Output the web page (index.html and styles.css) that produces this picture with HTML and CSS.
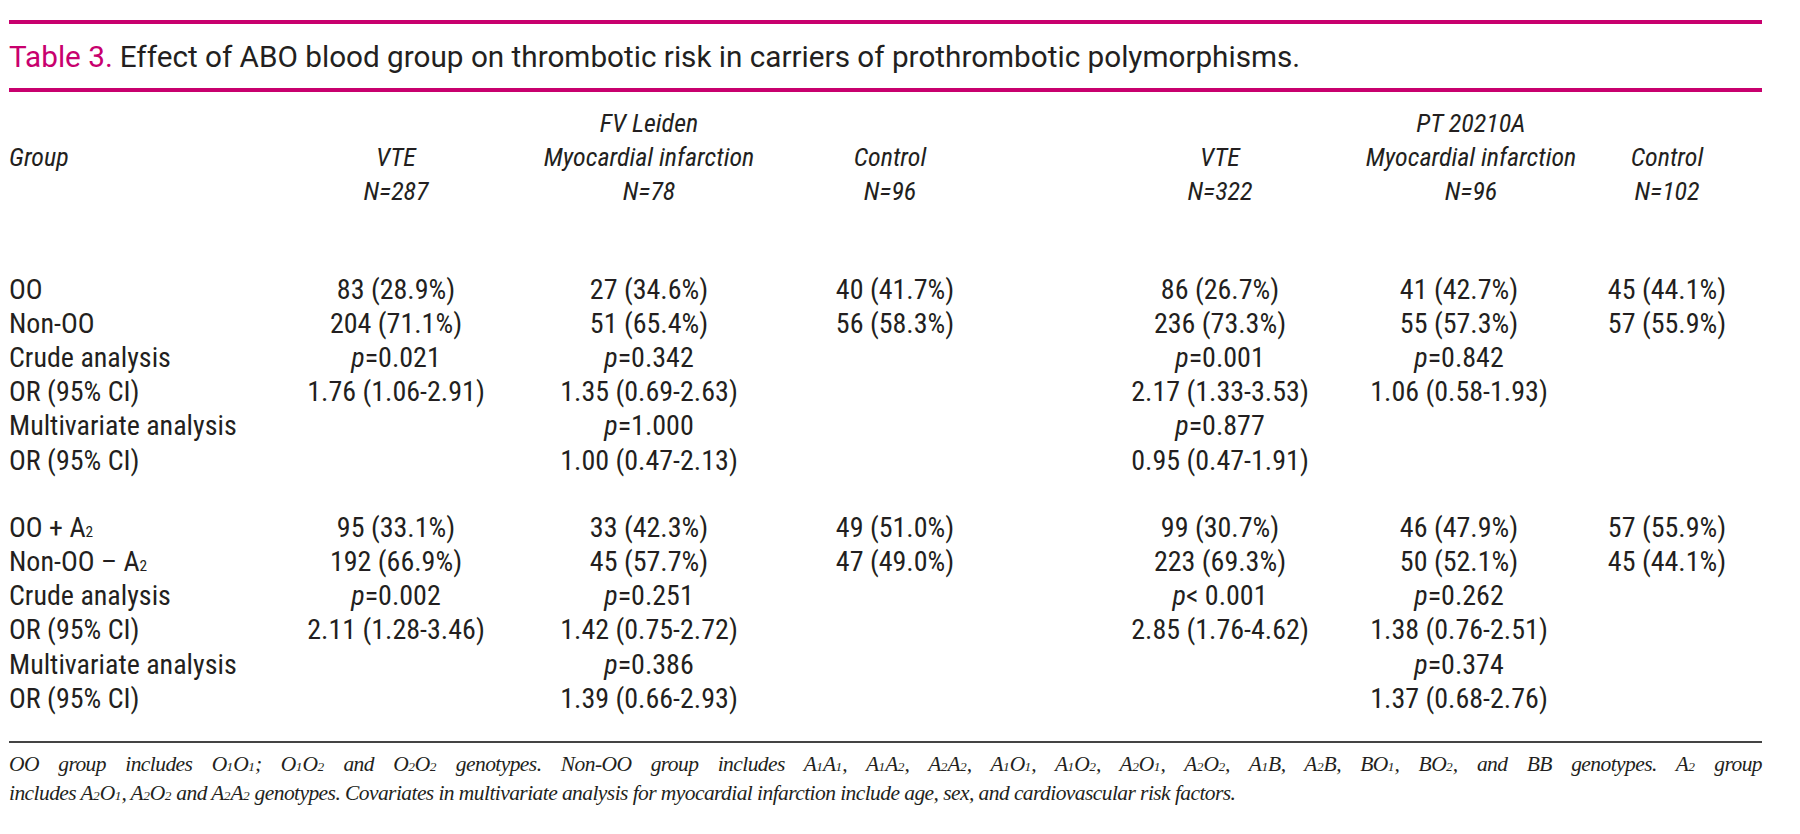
FILE: index.html
```html
<!DOCTYPE html>
<html lang="en">
<head>
<meta charset="utf-8">
<title>Table 3</title>
<link rel="stylesheet" href="styles.css">
</head>
<body>
<div class="page">
  <div class="rule-pink"></div>
  <h1 class="title"><span class="label">Table 3.</span> Effect of ABO blood group on thrombotic risk in carriers of prothrombotic polymorphisms.</h1>
  <div class="rule-pink"></div>
  <table class="data">
    <colgroup>
      <col class="c-label"><col class="c-vte1"><col class="c-mi1"><col class="c-ctl1"><col class="c-vte2"><col class="c-mi2"><col class="c-ctl2">
    </colgroup>
    <thead>
      <tr><th></th><th></th><th>FV Leiden</th><th></th><th class="pad"></th><th class="mi2">PT 20210A</th><th></th></tr>
      <tr><th class="lbl">Group</th><th>VTE</th><th>Myocardial infarction</th><th>Control</th><th class="pad">VTE</th><th class="mi2">Myocardial infarction</th><th>Control</th></tr>
      <tr><th></th><th>N=287</th><th>N=78</th><th>N=96</th><th class="pad">N=322</th><th class="mi2">N=96</th><th>N=102</th></tr>
    </thead>
    <tbody class="grp first">
      <tr><td class="lbl">OO</td><td>83 (28.9%)</td><td>27 (34.6%)</td><td class="ctl1">40 (41.7%)</td><td class="pad">86 (26.7%)</td><td class="mi2">41 (42.7%)</td><td>45 (44.1%)</td></tr>
      <tr><td class="lbl">Non-OO</td><td>204 (71.1%)</td><td>51 (65.4%)</td><td class="ctl1">56 (58.3%)</td><td class="pad">236 (73.3%)</td><td class="mi2">55 (57.3%)</td><td>57 (55.9%)</td></tr>
      <tr><td class="lbl">Crude analysis</td><td><i>p</i>=0.021</td><td><i>p</i>=0.342</td><td class="ctl1"></td><td class="pad"><i>p</i>=0.001</td><td class="mi2"><i>p</i>=0.842</td><td></td></tr>
      <tr><td class="lbl">OR (95% CI)</td><td>1.76 (1.06-2.91)</td><td>1.35 (0.69-2.63)</td><td class="ctl1"></td><td class="pad">2.17 (1.33-3.53)</td><td class="mi2">1.06 (0.58-1.93)</td><td></td></tr>
      <tr><td class="lbl">Multivariate analysis</td><td></td><td><i>p</i>=1.000</td><td class="ctl1"></td><td class="pad"><i>p</i>=0.877</td><td class="mi2"></td><td></td></tr>
      <tr><td class="lbl">OR (95% CI)</td><td></td><td>1.00 (0.47-2.13)</td><td class="ctl1"></td><td class="pad">0.95 (0.47-1.91)</td><td class="mi2"></td><td></td></tr>
    </tbody>
    <tbody class="grp second">
      <tr><td class="lbl">OO + A<sub>2</sub></td><td>95 (33.1%)</td><td>33 (42.3%)</td><td class="ctl1">49 (51.0%)</td><td class="pad">99 (30.7%)</td><td class="mi2">46 (47.9%)</td><td>57 (55.9%)</td></tr>
      <tr><td class="lbl">Non-OO – A<sub>2</sub></td><td>192 (66.9%)</td><td>45 (57.7%)</td><td class="ctl1">47 (49.0%)</td><td class="pad">223 (69.3%)</td><td class="mi2">50 (52.1%)</td><td>45 (44.1%)</td></tr>
      <tr><td class="lbl">Crude analysis</td><td><i>p</i>=0.002</td><td><i>p</i>=0.251</td><td class="ctl1"></td><td class="pad"><i>p</i>&lt; 0.001</td><td class="mi2"><i>p</i>=0.262</td><td></td></tr>
      <tr><td class="lbl">OR (95% CI)</td><td>2.11 (1.28-3.46)</td><td>1.42 (0.75-2.72)</td><td class="ctl1"></td><td class="pad">2.85 (1.76-4.62)</td><td class="mi2">1.38 (0.76-2.51)</td><td></td></tr>
      <tr><td class="lbl">Multivariate analysis</td><td></td><td><i>p</i>=0.386</td><td class="ctl1"></td><td class="pad"></td><td class="mi2"><i>p</i>=0.374</td><td></td></tr>
      <tr><td class="lbl">OR (95% CI)</td><td></td><td>1.39 (0.66-2.93)</td><td class="ctl1"></td><td class="pad"></td><td class="mi2">1.37 (0.68-2.76)</td><td></td></tr>
    </tbody>
  </table>
  <div class="rule-thin"></div>
  <p class="note"><span class="line1">OO group includes O<sub>1</sub>O<sub>1</sub>; O<sub>1</sub>O<sub>2</sub> and O<sub>2</sub>O<sub>2</sub> genotypes. Non-OO group includes A<sub>1</sub>A<sub>1</sub>, A<sub>1</sub>A<sub>2</sub>, A<sub>2</sub>A<sub>2</sub>, A<sub>1</sub>O<sub>1</sub>, A<sub>1</sub>O<sub>2</sub>, A<sub>2</sub>O<sub>1</sub>, A<sub>2</sub>O<sub>2</sub>, A<sub>1</sub>B, A<sub>2</sub>B, BO<sub>1</sub>, BO<sub>2</sub>, and BB genotypes. A<sub>2</sub> group</span> <span class="line2">includes A<sub>2</sub>O<sub>1</sub>, A<sub>2</sub>O<sub>2</sub> and A<sub>2</sub>A<sub>2</sub> genotypes. Covariates in multivariate analysis for myocardial infarction include age, sex, and cardiovascular risk factors.</span></p>
</div>
</body>
</html>
```
FILE: styles.css
```css
html, body {
  margin: 0;
  padding: 0;
  background: #ffffff;
}
.page {
  width: 1753px;
  padding: 20px 0 0 9px;
  color: #231f20;
  font-family: "Roboto Condensed", "Roboto", "Liberation Sans", sans-serif;
  font-stretch: condensed;
}
.rule-pink {
  height: 4px;
  background: #c8006e;
}
.title {
  margin: 0;
  height: 64px;
  display: flex;
  align-items: center;
  font-family: "Roboto", "Liberation Sans", sans-serif;
  font-stretch: normal;
  font-size: 29.7px;
  font-weight: normal;
  white-space: nowrap;
}
.title .label {
  color: #c8006e;
  margin-right: 7px;
}
.data {
  border-collapse: collapse;
  table-layout: fixed;
  width: 1733px;
  margin-top: 14px;
  font-size: 28px;
}
.c-label { width: 267px; }
.c-vte1 { width: 240px; }
.c-mi1 { width: 266px; }
.c-ctl1 { width: 216px; }
.c-vte2 { width: 342px; }
.c-mi2 { width: 252px; }
.c-ctl2 { width: 150px; }
.data th, .data td {
  padding: 0;
  height: 34.2px;
  line-height: 34.2px;
  text-align: center;
  white-space: nowrap;
  vertical-align: middle;
}
.data th {
  font-style: italic;
  font-weight: normal;
  font-size: 26px;
}
.data .lbl { text-align: left; }
.data .pad { padding-left: 102px; }
.data th.mi2 { padding-left: 10px; }
.data td.mi2 { padding-right: 14px; }
.data td.ctl1 { padding-left: 10px; }
.data .grp.first tr:first-child td { padding-top: 64px; }
.data .grp.second tr:first-child td { padding-top: 33px; }
.data sub {
  font-size: 0.55em;
  line-height: 0;
  vertical-align: baseline;
}
.rule-thin {
  height: 2px;
  background: #444;
  margin-top: 25px;
}
.note {
  margin: 7px 0 0;
  font-family: "Liberation Serif", serif;
  font-style: italic;
  font-size: 21.5px;
  letter-spacing: -0.57px;
  line-height: 29px;
  color: #231f20;
}
.note .line1 {
  display: block;
  text-align: justify;
  text-align-last: justify;
  white-space: nowrap;
}
.note .line2 {
  display: block;
  white-space: nowrap;
}
.note sub {
  font-size: 0.62em;
  line-height: 0;
  vertical-align: baseline;
  letter-spacing: 0;
}
```
